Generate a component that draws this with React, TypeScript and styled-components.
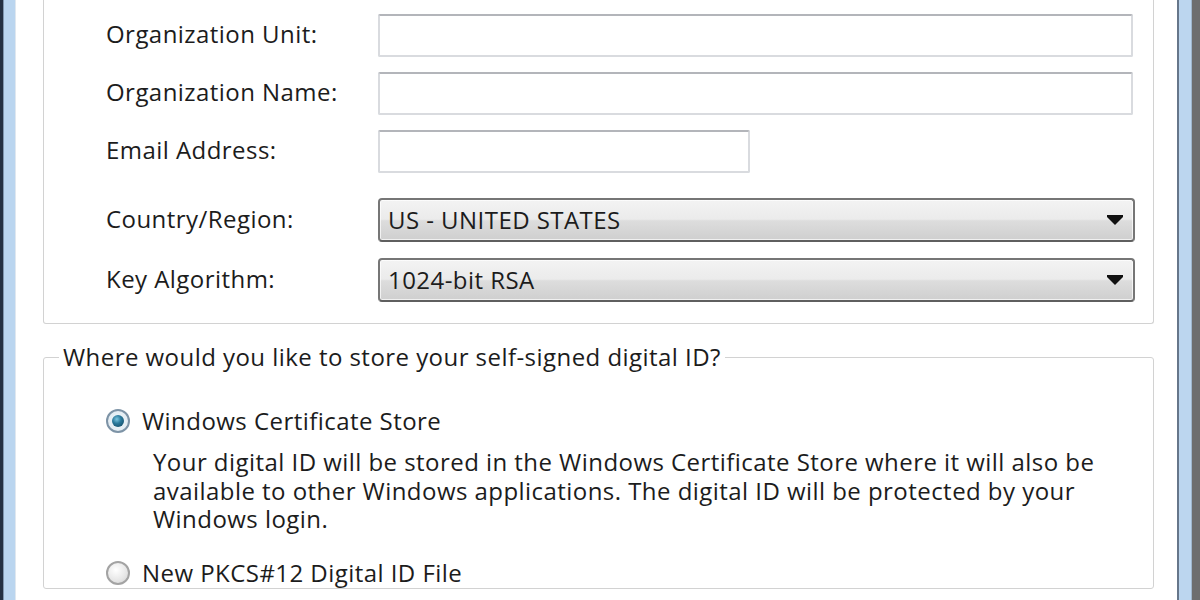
import React from "react";
import styled, { createGlobalStyle } from "styled-components";

const GlobalStyle = createGlobalStyle`
  html, body {
    margin: 0;
    padding: 0;
    background: #ffffff;
  }
  body {
    font-family: "Open Sans", "Noto Sans", "Liberation Sans", sans-serif;
    color: #1c1c1c;
    letter-spacing: 0.45px;
  }
`;

const Window = styled.div`
  display: flex;
  width: 1200px;
  height: 600px;
  overflow: hidden;
  background: #ffffff;
`;

const LeftFrame = styled.div`
  flex: none;
  width: 12px;
  border-left: 3px solid #243042;
  border-right: 1px solid #dfe7ef;
  background: #bad5ef;
  box-shadow: inset 1px 0 0 #7f95ae;
`;

const RightFrame = styled.div`
  flex: none;
  width: 13px;
  border-left: 2px solid #66768a;
  border-right: 8px solid #6e6e6e;
  background: #bcd6ef;
  box-shadow: inset -1px 0 0 #9fb6cc;
`;

const Client = styled.div`
  flex: 1;
  display: flex;
  flex-direction: column;
  padding: 0 23px 0 27px;
  min-width: 0;
`;

const GroupBox = styled.fieldset<{ $cutTop?: boolean }>`
  margin: 0;
  padding: 0;
  min-inline-size: 0;
  border: 1px solid #d2d2d2;
  border-top: ${(p) => (p.$cutTop ? "none" : "1px solid #d2d2d2")};
  border-radius: ${(p) => (p.$cutTop ? "0 0 3px 3px" : "3px")};
  box-shadow: inset 1px 1px 0 #ffffff;
`;

const TopGroup = styled(GroupBox)`
  padding: 14px 17px 21px 62px;
`;

const BottomGroup = styled(GroupBox)`
  margin-top: 17px;
`;

const GroupBody = styled.div`
  padding: 34px 17px 0 62px;
`;

const Legend = styled.legend`
  margin-left: 15px;
  padding: 0 4px;
  font-size: 24px;
  line-height: 32px;
`;

const FieldRow = styled.div<{ $spaceAbove?: number }>`
  display: flex;
  align-items: center;
  margin-top: ${(p) => p.$spaceAbove ?? 0}px;
`;

const Label = styled.label`
  flex: none;
  width: 272px;
  padding-bottom: 3px;
  font-size: 24px;
  line-height: 28px;
  white-space: nowrap;
`;

const TextBox = styled.div<{ $width: number }>`
  box-sizing: border-box;
  width: ${(p) => p.$width}px;
  height: 43px;
  border: 2px solid #d9dbdf;
  border-top-color: #b3b5ba;
  border-radius: 2px;
  background: #ffffff;
`;

const ComboBox = styled.div`
  box-sizing: border-box;
  display: flex;
  align-items: center;
  justify-content: space-between;
  width: 757px;
  height: 44px;
  padding: 0 10px 0 8px;
  border: 2px solid #767676;
  border-bottom-color: #5f5f5f;
  border-radius: 4px;
  background: linear-gradient(
    to bottom,
    #f3f3f3 0%,
    #ebebeb 48%,
    #dddddd 52%,
    #cfcfcf 100%
  );
  box-shadow: inset 0 0 0 1px rgba(255, 255, 255, 0.7);
  font-size: 24px;
  line-height: 28px;
  white-space: nowrap;
`;

const Arrow = () => (
  <svg width="16" height="10" viewBox="0 0 16 10" aria-hidden="true">
    <path d="M0 0 H16 V2 L8 10 L0 2 Z" fill="#111111" />
  </svg>
);

const OptionRow = styled.div<{ $spaceAbove?: number }>`
  display: flex;
  align-items: center;
  gap: 12px;
  margin-top: ${(p) => p.$spaceAbove ?? 0}px;
  font-size: 24px;
  line-height: 28.5px;
`;

const Radio = styled.span<{ $checked?: boolean }>`
  position: relative;
  flex: none;
  box-sizing: border-box;
  width: 24px;
  height: 24px;
  border-radius: 50%;
  border: 2px solid ${(p) => (p.$checked ? "#7d93a6" : "#a3a3a3")};
  background: ${(p) =>
    p.$checked
      ? "radial-gradient(circle at 50% 50%, #f4f8fb 0%, #dbe7ef 100%)"
      : "radial-gradient(circle at 40% 35%, #ffffff 0%, #e6e6e6 60%, #cfcfcf 100%)"};

  &::after {
    content: "";
    display: ${(p) => (p.$checked ? "block" : "none")};
    position: absolute;
    left: 4px;
    top: 4px;
    width: 12px;
    height: 12px;
    border-radius: 50%;
    background: radial-gradient(
      circle at 40% 35%,
      #7cc6e0 0%,
      #2b7a9c 40%,
      #0f3f58 100%
    );
  }
`;

const Description = styled.p`
  margin: 12.5px 0 0 47px;
  font-size: 24px;
  line-height: 28.5px;
  white-space: nowrap;
`;

export default function App() {
  return (
    <>
      <GlobalStyle />
      <Window>
        <LeftFrame />
        <Client>
          <TopGroup $cutTop>
            <FieldRow>
              <Label>Organization Unit:</Label>
              <TextBox $width={755} />
            </FieldRow>
            <FieldRow $spaceAbove={15}>
              <Label>Organization Name:</Label>
              <TextBox $width={755} />
            </FieldRow>
            <FieldRow $spaceAbove={15}>
              <Label>Email Address:</Label>
              <TextBox $width={372} />
            </FieldRow>
            <FieldRow $spaceAbove={25}>
              <Label>Country/Region:</Label>
              <ComboBox>
                <span>US - UNITED STATES</span>
                <Arrow />
              </ComboBox>
            </FieldRow>
            <FieldRow $spaceAbove={16}>
              <Label>Key Algorithm:</Label>
              <ComboBox>
                <span>1024-bit RSA</span>
                <Arrow />
              </ComboBox>
            </FieldRow>
          </TopGroup>
          <BottomGroup>
            <Legend>Where would you like to store your self-signed digital ID?</Legend>
            <GroupBody>
              <OptionRow>
                <Radio $checked />
                <span>Windows Certificate Store</span>
              </OptionRow>
              <Description>
                Your digital ID will be stored in the Windows Certificate Store where it will also be
                <br />
                available to other Windows applications. The digital ID will be protected by your
                <br />
                Windows login.
              </Description>
              <OptionRow $spaceAbove={25.5}>
                <Radio />
                <span>New PKCS#12 Digital ID File</span>
              </OptionRow>
            </GroupBody>
          </BottomGroup>
        </Client>
        <RightFrame />
      </Window>
    </>
  );
}
